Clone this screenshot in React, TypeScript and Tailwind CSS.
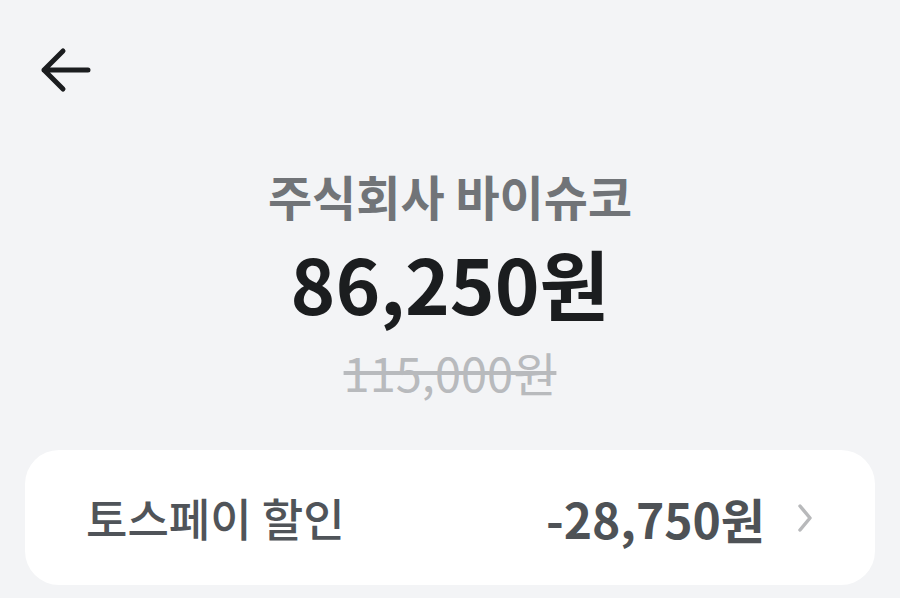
import React from "react";

const font = { fontFamily: '"Noto Sans CJK KR", "Noto Sans", sans-serif' };

function BackArrow() {
  return (
    <svg width="54" height="48" viewBox="0 0 54 48" fill="none">
      <path
        d="M23 5 L4 24 L23 43 M4 24 H48"
        stroke="#1b1d1f"
        strokeWidth="5"
        strokeLinecap="round"
        strokeLinejoin="round"
      />
    </svg>
  );
}

function Chevron() {
  return (
    <svg width="20" height="30" viewBox="0 0 20 30" fill="none">
      <path
        d="M5 3 L15 15 L5 27"
        stroke="#b8b9bb"
        strokeWidth="3.5"
        strokeLinecap="round"
        strokeLinejoin="round"
      />
    </svg>
  );
}

export default function App() {
  return (
    <div className="w-full h-[598px] bg-[#f3f4f6] overflow-hidden flex flex-col" style={font}>
      <div className="pt-[46px] pl-[40px] h-[100px]">
        <BackArrow />
      </div>
      <div className="flex flex-col items-center mt-[67px]">
        <div className="text-[48px] leading-[56px] font-bold text-[#717478]">
          주식회사 바이슈코
        </div>
        <div className="text-[76px] leading-[96px] font-bold text-[#1b1d1f] mt-[11px]">
          86,250원
        </div>
        <div className="text-[47px] leading-[56px] text-[#b8babd] line-through mt-[14px]">
          115,000원
        </div>
      </div>
      <div className="mx-[25px] mt-[50px] h-[135px] shrink-0 bg-white rounded-[34px] flex items-center pl-[61px] pr-[60px]">
        <div className="text-[45px] font-medium text-[#505459]">토스페이 할인</div>
        <div className="ml-auto flex items-center gap-[30px]">
          <div className="text-[48px] font-semibold text-[#4e5256]">-28,750원</div>
          <Chevron />
        </div>
      </div>
    </div>
  );
}
